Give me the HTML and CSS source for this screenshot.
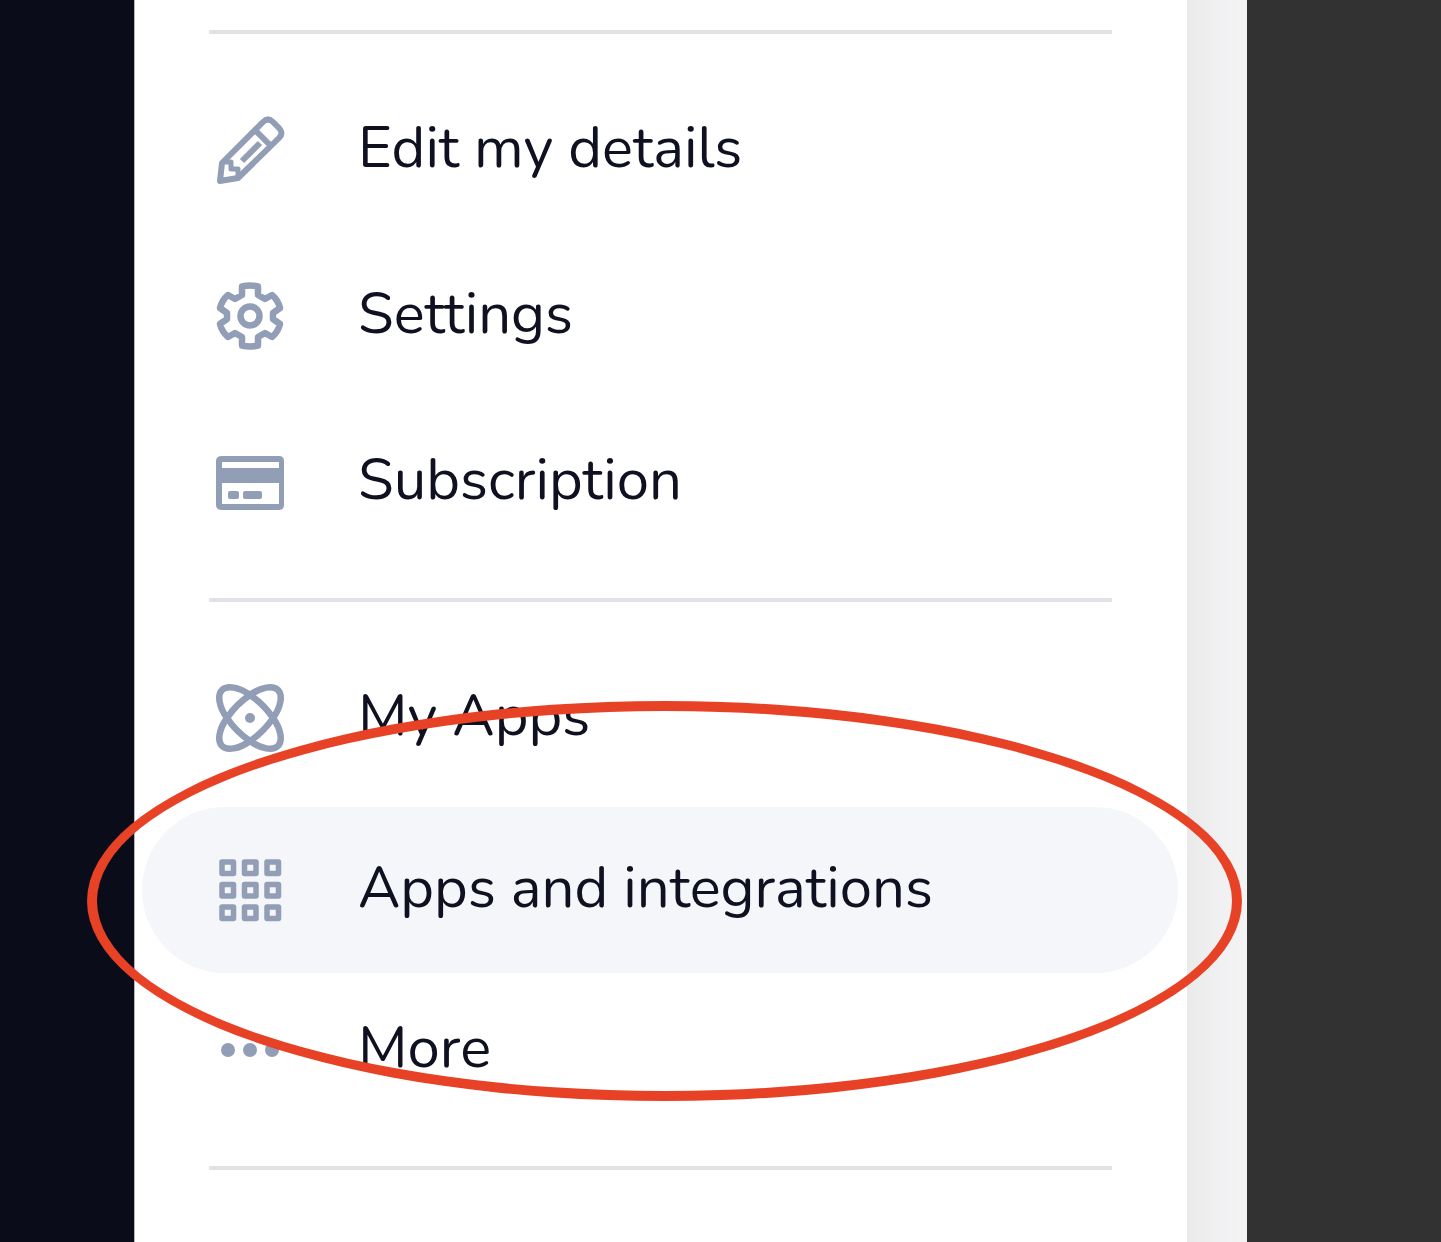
FILE: index.html
```
<!DOCTYPE html>
<html lang="en">
<head>
  <meta charset="UTF-8">
  <meta name="viewport" content="width=device-width, initial-scale=1.0">
  <title>Account menu</title>
  <link rel="stylesheet" href="styles.css">
</head>
<body>
  <div class="page">
    <div class="page-side"></div>
    <nav class="menu" aria-label="Account menu">
      <hr class="divider">
      <ul class="menu-list">
        <li><a class="menu-item" href="#">
          <svg class="icon" viewBox="0 0 72 72" fill="none" stroke="currentColor" stroke-width="6" stroke-linejoin="round">
            <path d="M6 67 8 49 49 8Q54 3 59 8L65 14Q70 19 65 24L24 64Z"/>
            <path d="M41 16 57 32M46 29 28 47"/>
            <path d="M8 48H17V55H24V64" stroke-width="5"/>
          </svg>
          <span class="menu-label">Edit my details</span>
        </a></li>
        <li><a class="menu-item" href="#">
          <svg class="icon" viewBox="0 0 72 72" fill="none" stroke="currentColor" stroke-width="6.5" stroke-linejoin="round">
            <path d="M28 6.5Q36 4.500 44 6.500V15L51 19 58 15Q64 20 66 28L59 33V39L66 44Q64 52 58 57L51 53 44 57V65.500Q36 67.500 28 65.500V57L21 53 14 57Q8 52 6 44L13 39V33L6 28Q8 20 14 15L21 19 28 15Z"/>
            <circle cx="36" cy="36" r="9.5"/>
          </svg>
          <span class="menu-label">Settings</span>
        </a></li>
        <li><a class="menu-item" href="#">
          <svg class="icon" viewBox="0 0 72 72" fill="currentColor">
            <path fill-rule="evenodd" d="M8 10H65Q70 10 70 15V59Q70 64 65 64H8Q2 64 2 59V15Q2 10 8 10ZM8 16V22H65V16ZM8 37V58H65V37Z"/>
            <rect x="14" y="45" width="11" height="8" rx="2"/>
            <rect x="29" y="45" width="19" height="8" rx="2"/>
          </svg>
          <span class="menu-label">Subscription</span>
        </a></li>
      </ul>
      <hr class="divider">
      <ul class="menu-list">
        <li><a class="menu-item" href="#">
          <svg class="icon" viewBox="0 0 72 72" fill="none" stroke="currentColor" stroke-width="6.5">
            <path d="M13 36C5 25 3 13 8 8C13 3 25 5 36 13C45 19 53 27 59 36C67 47 69 59 64 64C59 69 47 67 36 59C27 53 19 45 13 36Z"/>
            <path d="M59 36C67 25 69 13 64 8C59 3 47 5 36 13C27 19 19 27 13 36C5 47 3 59 8 64C13 69 25 67 36 59C45 53 53 45 59 36Z"/>
            <circle cx="36" cy="36" r="5" fill="currentColor" stroke="none"/>
          </svg>
          <span class="menu-label">My Apps</span>
        </a></li>
        <li class="current"><a class="menu-item" href="#" aria-current="page">
          <svg class="icon" viewBox="0 0 72 72" fill="none" stroke="currentColor" stroke-width="5.5" stroke-linejoin="round">
            <rect x="8" y="8" width="11.5" height="11.5"/>
            <rect x="30.5" y="8" width="11.5" height="11.5"/>
            <rect x="53" y="8" width="11.5" height="11.5"/>
            <rect x="8" y="30.5" width="11.5" height="11.5"/>
            <rect x="30.5" y="30.5" width="11.5" height="11.5"/>
            <rect x="53" y="30.5" width="11.5" height="11.5"/>
            <rect x="8" y="53" width="11.5" height="11.5"/>
            <rect x="30.5" y="53" width="11.5" height="11.5"/>
            <rect x="53" y="53" width="11.5" height="11.5"/>
          </svg>
          <span class="menu-label">Apps and integrations</span>
        </a>
          <span class="highlight-ring"></span>
        </li>
        <li><a class="menu-item" href="#">
          <svg class="icon" viewBox="0 0 72 72" fill="currentColor">
            <circle cx="14" cy="36" r="7"/>
            <circle cx="36" cy="36" r="7"/>
            <circle cx="58" cy="36" r="7"/>
          </svg>
          <span class="menu-label">More</span>
        </a></li>
      </ul>
      <hr class="divider">
    </nav>
    <div class="page-edge"></div>
    <div class="page-backdrop"></div>
  </div>
</body>
</html>
```
FILE: styles.css
```
:root {
  --ink: #0f1020;
  --icon: #929db6;
  --line: #e1e2e6;
  --hover: #f5f6fa;
  --ring: #e84226;
  --night: #0b0c1a;
}
* {
  box-sizing: border-box;
}
body {
  margin: 0;
  font-family: Nunito, Lato, sans-serif;
  color: var(--ink);
}
.page {
  display: flex;
  min-height: 100vh;
  overflow: hidden;
}
.page-side {
  width: 134px;
  background: var(--night);
}
.menu {
  flex: 1;
  padding: 30px 9px 0 7px;
  border-left: 1px solid #b4b4be;
  background: #fff;
}
.divider {
  height: 4px;
  margin: 0 66px 0 67px;
  border: 0;
  background: var(--line);
}
.menu-list {
  list-style: none;
  margin: 0;
  padding: 33px 0;
}
.menu-item {
  display: flex;
  align-items: center;
  gap: 72px;
  height: 166px;
  padding: 0 72px;
  border-radius: 83px;
  color: inherit;
  font-size: 58px;
  line-height: 72px;
  text-decoration: none;
}
.icon {
  flex: none;
  width: 72px;
  height: 72px;
  color: var(--icon);
}
.menu-label {
  padding-bottom: 4px;
}
.current {
  position: relative;
  margin: 6px 0 -6px;
}
.current .menu-item {
  background: var(--hover);
}
.highlight-ring {
  position: absolute;
  z-index: 1;
  inset: -106px -64px -128px -55px;
  border: 10px solid var(--ring);
  border-radius: 50%;
  pointer-events: none;
}
.page-edge {
  width: 60px;
  background: linear-gradient(to right, #eaeaea, #f1f1f3 60%, #f4f4f4);
}
.page-backdrop {
  width: 194px;
  background: #323232;
}
```
